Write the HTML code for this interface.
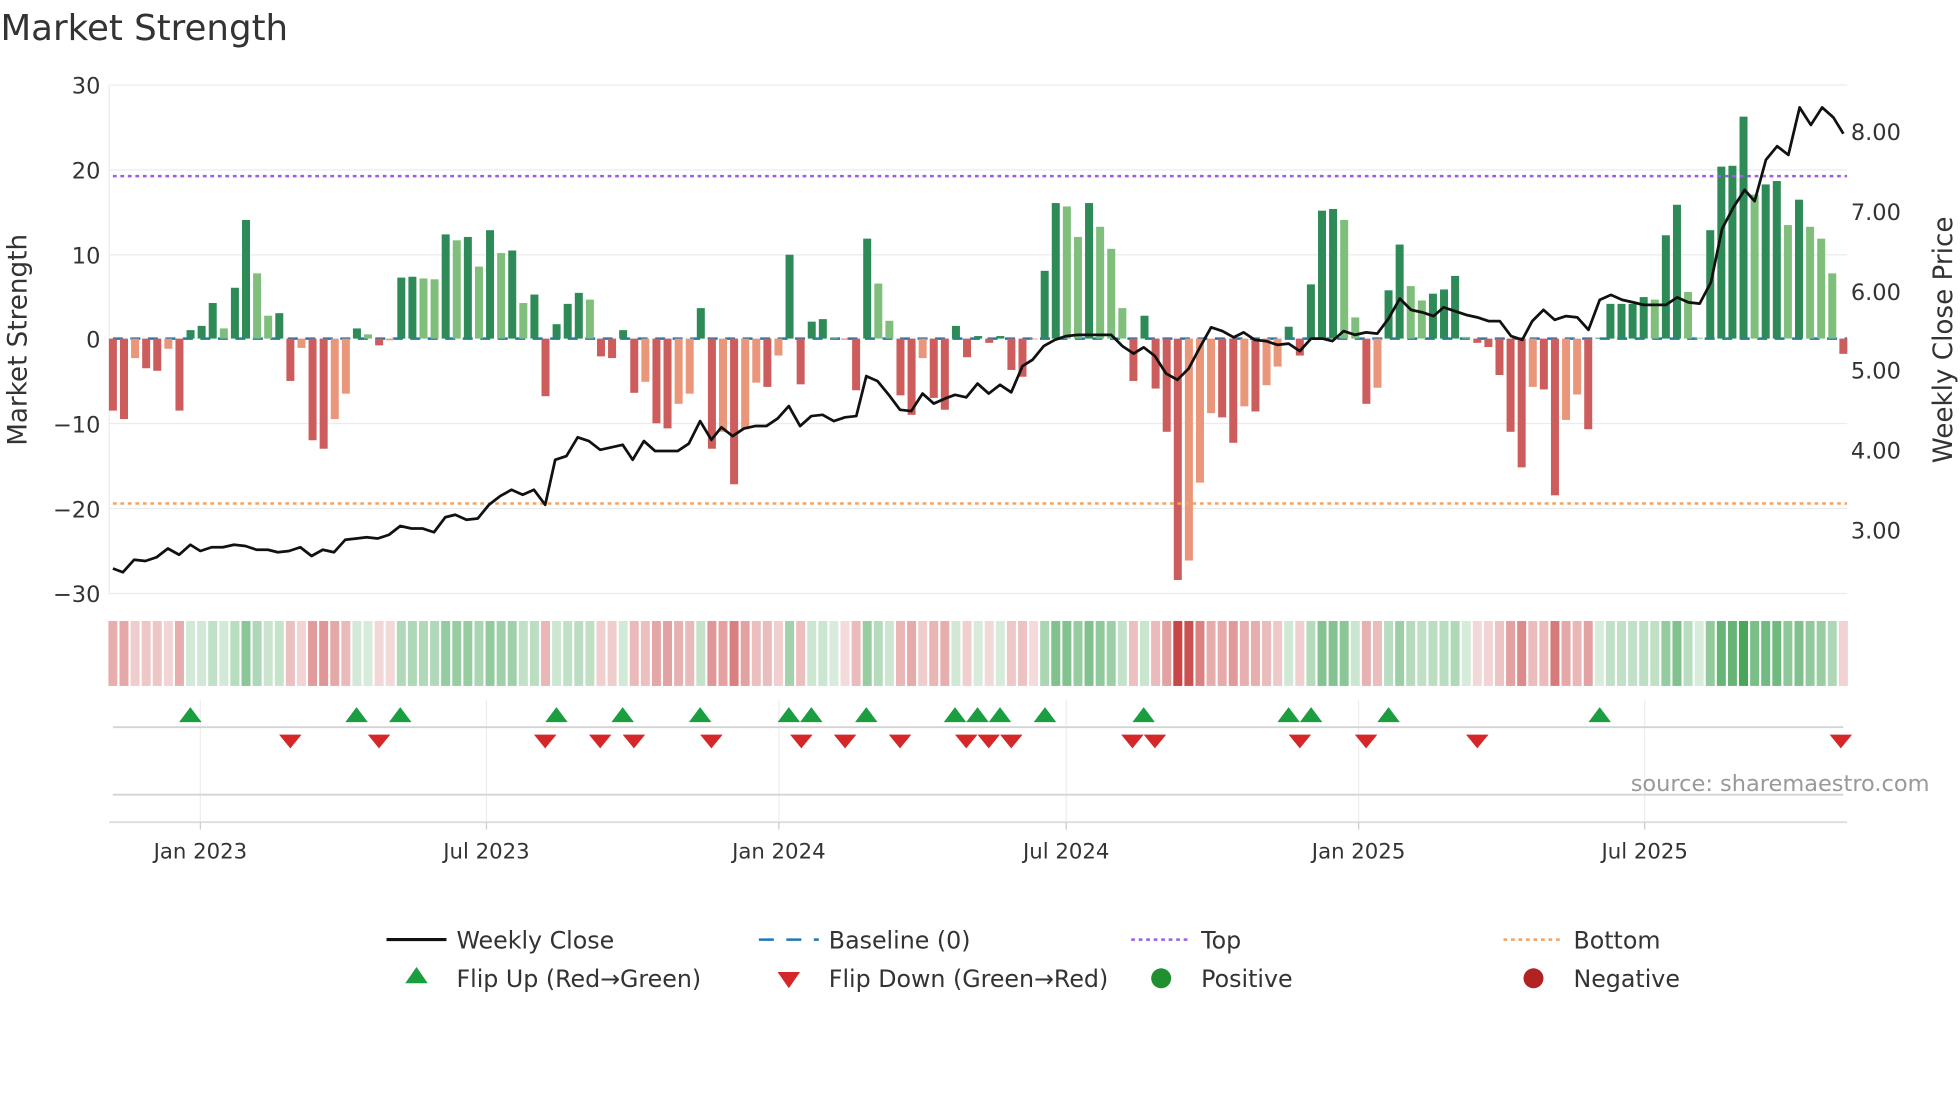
<!DOCTYPE html>
<html><head><meta charset="utf-8"><style>
html,body{margin:0;padding:0;background:#fff;width:1960px;height:1102px;overflow:hidden}
svg{display:block}
text{font-family:"DejaVu Sans","Liberation Sans",sans-serif;fill:#333}
</style></head><body>
<svg id="s" width="1960" height="1102" viewBox="0 0 1568 882" xmlns="http://www.w3.org/2000/svg">
<text x="0" y="32" font-size="28.5">Market Strength</text>
<g stroke="#ececec" stroke-width="1">
<line x1="87" y1="68" x2="1478" y2="68"/><line x1="87" y1="136" x2="1478" y2="136"/><line x1="87" y1="204" x2="1478" y2="204"/><line x1="87" y1="339" x2="1478" y2="339"/><line x1="87" y1="407" x2="1478" y2="407"/><line x1="87" y1="475" x2="1478" y2="475"/>
<line x1="87" y1="68" x2="87" y2="475"/>
</g>
<g font-size="18" text-anchor="end">
<text x="80" y="75">30</text><text x="80" y="143">20</text><text x="80" y="211">10</text><text x="80" y="278">0</text><text x="80" y="346">−10</text><text x="80" y="414">−20</text><text x="80" y="482">−30</text>
</g>
<g font-size="18">
<text x="1481" y="112">8.00</text><text x="1481" y="176">7.00</text><text x="1481" y="240">6.00</text><text x="1481" y="303">5.00</text><text x="1481" y="367">4.00</text><text x="1481" y="431">3.00</text>
</g>
<text transform="translate(21,272) rotate(-90)" font-size="21" text-anchor="middle">Market Strength</text>
<text transform="translate(1562,272) rotate(-90)" font-size="21" text-anchor="middle">Weekly Close Price</text>
<line x1="90" y1="271" x2="1478" y2="271" stroke="#1f77b4" stroke-width="2" stroke-dasharray="8,6"/>
<g id="bars"></g>
<line x1="90" y1="141" x2="1478" y2="141" stroke="#9b5de5" stroke-width="2" stroke-dasharray="3,3"/>
<line x1="90" y1="403" x2="1478" y2="403" stroke="#f4a261" stroke-width="2" stroke-dasharray="3,3"/>
<polyline id="price" fill="none" stroke="#111" stroke-width="2.2" stroke-linejoin="round"/>
<g id="heat"></g>
<g stroke="#eee"><line x1="160" y1="560" x2="160" y2="658"/><line x1="389" y1="560" x2="389" y2="658"/><line x1="623" y1="560" x2="623" y2="658"/><line x1="853" y1="560" x2="853" y2="658"/><line x1="1087" y1="560" x2="1087" y2="658"/><line x1="1316" y1="560" x2="1316" y2="658"/></g>
<line x1="90" y1="582" x2="1475" y2="582" stroke="#d4d4d4" stroke-width="1.5"/>
<line x1="90" y1="636" x2="1475" y2="636" stroke="#d4d4d4" stroke-width="1.5"/>
<line x1="87" y1="658" x2="1478" y2="658" stroke="#ddd" stroke-width="1.5"/>
<g id="mk"></g>
<text x="1544" y="633" font-size="18" text-anchor="end" style="fill:#999">source: sharemaestro.com</text>
<g stroke="#ccc"><line x1="160" y1="658" x2="160" y2="664"/><line x1="389" y1="658" x2="389" y2="664"/><line x1="623" y1="658" x2="623" y2="664"/><line x1="853" y1="658" x2="853" y2="664"/><line x1="1087" y1="658" x2="1087" y2="664"/><line x1="1316" y1="658" x2="1316" y2="664"/></g>
<g font-size="17" text-anchor="middle">
<text x="160" y="687">Jan 2023</text><text x="389" y="687">Jul 2023</text><text x="623" y="687">Jan 2024</text><text x="853" y="687">Jul 2024</text><text x="1087" y="687">Jan 2025</text><text x="1316" y="687">Jul 2025</text>
</g>
<g font-size="19">
<line x1="309" y1="752" x2="357" y2="752" stroke="#111" stroke-width="2.5"/><text x="365" y="759">Weekly Close</text>
<line x1="607" y1="752" x2="655" y2="752" stroke="#1f77b4" stroke-width="2" stroke-dasharray="12,10"/><text x="663" y="759">Baseline (0)</text>
<line x1="905" y1="752" x2="950" y2="752" stroke="#9b5de5" stroke-width="2" stroke-dasharray="3,3"/><text x="961" y="759">Top</text>
<line x1="1203" y1="752" x2="1248" y2="752" stroke="#f4a261" stroke-width="2" stroke-dasharray="3,3"/><text x="1259" y="759">Bottom</text>
<polygon points="333,774 324,787 342,787" fill="#1a9e3f"/><text x="365" y="790">Flip Up (Red→Green)</text>
<polygon points="622,778 640,778 631,791" fill="#d62728"/><text x="663" y="790">Flip Down (Green→Red)</text>
<circle cx="929" cy="783" r="8" fill="#1f8f2f"/><text x="961" y="790">Positive</text>
<circle cx="1227" cy="783" r="8" fill="#b22222"/><text x="1259" y="790">Negative</text>
</g>
</svg>
<script>
var V=[-8.5,-9.5,-2.3,-3.5,-3.8,-1.2,-8.5,1.0,1.5,4.2,1.2,6,14,7.7,2.7,3,-5,-1.1,-12,-13,-9.5,-6.5,1.2,0.5,-0.8,-0.2,7.2,7.3,7.1,7,12.3,11.6,12,8.5,12.8,10.1,10.4,4.2,5.2,-6.8,1.7,4.1,5.4,4.6,-2.1,-2.3,1,-6.4,-5.1,-10,-10.6,-7.7,-6.5,3.6,-13,-11,-17.2,-10.7,-5.2,-5.7,-2,9.9,-5.4,2,2.3,0.1,-0.1,-6.1,11.8,6.5,2.1,-6.7,-9,-2.3,-7,-8.4,1.5,-2.2,0.3,-0.5,0.3,-3.7,-4.5,-0.1,8,16,15.6,12,16,13.2,10.6,3.6,-5,2.7,-5.9,-11,-28.5,-26.2,-17,-8.8,-9.3,-12.3,-8,-8.6,-5.5,-3.3,1.4,-2,6.4,15.1,15.3,14,2.5,-7.7,-5.8,5.7,11.1,6.2,4.5,5.3,5.8,7.4,0.2,-0.5,-1,-4.3,-11,-15.2,-5.7,-6,-18.5,-9.6,-6.6,-10.7,0.1,4.1,4.1,4.1,4.9,4.6,12.2,15.8,5.5,0.1,12.8,20.3,20.4,26.2,17,18.2,18.6,13.4,16.4,13.2,11.8,7.7,-1.8];
var n=V.length,x0=90,dx=(1475-90)/(n-1),ns="http://www.w3.org/2000/svg";
function el(t,a,p){var e=document.createElementNS(ns,t);for(var k in a)e.setAttribute(k,a[k]);p.appendChild(e);}
var B=document.getElementById('bars'),H=document.getElementById('heat');
for(var i=0;i<n;i++){var v=V[i],x=x0+i*dx,h=Math.abs(v)*6.78,prev=i?V[i-1]:0;
 var strong=(v>0&&v>=prev)||(v<0&&v<=prev);
 var c=v>=0?(strong?'#2e8b57':'#7fbf7b'):(strong?'#cd5c5c':'#e9967a');
 el('rect',{x:x-3.2,y:v>=0?271-h:271,width:6.4,height:Math.max(h,0.5),fill:c},B);
 var a=Math.min(1,0.2+Math.abs(v)/30*0.85);
 var hc=v>=0?'rgba(60,160,80,'+a.toFixed(2)+')':'rgba(200,70,70,'+a.toFixed(2)+')';
 el('rect',{x:x-3.6,y:497,width:7.2,height:52,fill:hc},H);}
var P=[[90,455],[98,458],[107,448],[116,449],[125,446],[134,439],[143,444],[152,436],[160,441],[169,438],[178,438],[187,436],[196,437],[205,440],[214,440],[222,442],[231,441],[240,438],[249,445],[258,440],[267,442],[276,432],[285,431],[293,430],[302,431],[311,428],[320,421],[329,423],[338,423],[347,426],[356,414],[364,412],[373,416],[382,415],[391,404],[400,397],[409,392],[418,396],[427,392],[436,404],[444,368],[453,365],[462,350],[471,353],[480,360],[489,358],[498,356],[506,368],[515,353],[524,361],[533,361],[542,361],[551,355],[560,337],[569,352],[577,342],[586,349],[595,343],[604,341],[613,341],[622,335],[631,325],[640,341],[649,333],[658,332],[667,337],[676,334],[685,333],[693,301],[702,305],[711,316],[720,328],[729,329],[738,315],[747,323],[756,319],[764,316],[773,318],[782,307],[791,315],[800,308],[809,314],[818,293],[826,288],[835,277],[844,272],[853,269],[862,268],[871,268],[880,268],[889,268],[898,277],[907,283],[915,278],[924,285],[933,299],[942,304],[951,295],[960,278],[969,262],[978,265],[987,270],[995,266],[1004,272],[1013,273],[1022,276],[1031,275],[1040,281],[1049,271],[1058,271],[1066,273],[1075,265],[1084,268],[1093,266],[1102,267],[1111,255],[1120,239],[1129,248],[1138,250],[1147,253],[1155,246],[1164,249],[1173,252],[1182,254],[1191,257],[1200,257],[1209,269],[1218,272],[1226,257],[1235,248],[1244,256],[1253,253],[1262,254],[1271,264],[1280,240],[1289,236],[1298,240],[1307,242],[1315,244],[1324,244],[1333,244],[1342,238],[1351,242],[1360,243],[1369,226],[1378,183],[1387,166],[1396,152],[1404,161],[1413,128],[1422,117],[1431,124],[1440,86],[1449,100],[1458,86],[1467,94],[1475,107]];
document.getElementById('price').setAttribute('points',P.map(function(p){return p.join(',')}).join(' '));
var M=document.getElementById('mk');
[152,285,320,445,498,560,631,649,693,764,782,800,836,915,1031,1049,1111,1280].forEach(function(x){el('polygon',{points:(x)+',566 '+(x-9)+',578 '+(x+9)+',578',fill:'#1a9e3f'},M);});
[232,303,436,480,507,569,641,676,720,773,791,809,906,924,1040,1093,1182,1473].forEach(function(x){el('polygon',{points:(x-9)+',588 '+(x+9)+',588 '+x+',599',fill:'#d62728'},M);});
</script>
</body></html>
